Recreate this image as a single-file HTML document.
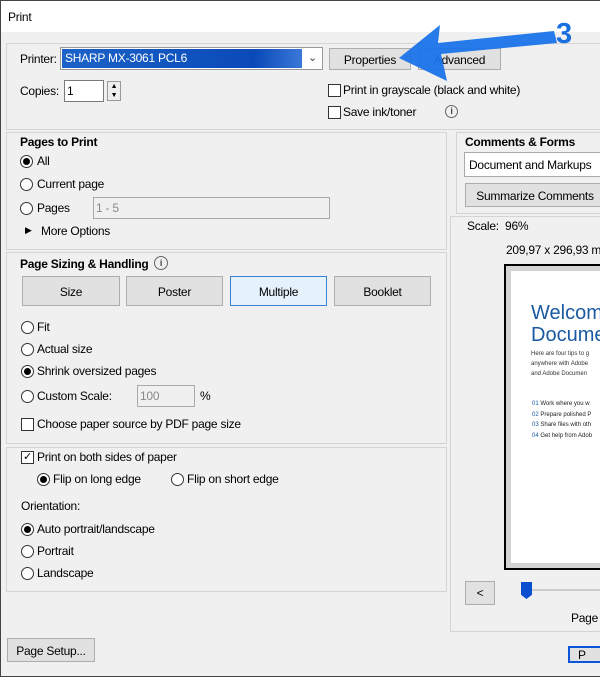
<!DOCTYPE html>
<html><head><meta charset="utf-8"><style>
*{box-sizing:border-box;margin:0;padding:0}
body{width:600px;height:677px;overflow:hidden;background:#f0f0f0;font-family:"Liberation Sans",sans-serif;font-size:12px;letter-spacing:-0.25px;color:#000;position:relative;border-left:1px solid #444;border-top:1px solid #444;border-bottom:1px solid #444}
.a{position:absolute;white-space:nowrap}
.box{position:absolute;border:1px solid #d4d4d4}
.btn{position:absolute;background:#e1e1e1;border:1px solid #adadad;text-align:center}
.rd{position:absolute;width:13px;height:13px;border:1px solid #333;border-radius:50%;background:#fff}
.rd.on::after{content:"";position:absolute;left:2px;top:2px;width:7px;height:7px;border-radius:50%;background:#000}
.cb{position:absolute;width:13px;height:13px;border:1px solid #333;background:#fff}
.in{position:absolute;border:1px solid #aaa;background:#f0f0f0;color:#888;padding-left:2px}
b{font-weight:bold}
</style></head><body>
<div class="a" style="left:0;top:0;width:600px;height:31px;background:#fff"></div>
<div class="a" style="left:7px;top:9px">Print</div>

<div class="box" style="left:5px;top:42px;width:600px;height:87px"></div>
<div class="a" style="left:19px;top:51px">Printer:</div>
<div class="a" style="left:59px;top:46px;width:263px;height:23px;border:1px solid #999;background:#fff"></div>
<div class="a" style="left:61px;top:48px;width:240px;height:19px;background:linear-gradient(90deg,#1c62c8,#0a4ab8 80%,#3a78d8);color:#fff;padding:2px 3px">SHARP MX-3061 PCL6</div>
<div class="a" style="left:307px;top:50px;font-size:11px;color:#444">&#8964;</div>
<div class="btn" style="left:328px;top:47px;width:82px;height:22px;padding-top:4px">Properties</div>
<div class="btn" style="left:417px;top:47px;width:83px;height:22px;padding-top:4px">Advanced</div>
<div class="a" style="left:19px;top:83px">Copies:</div>
<div class="a" style="left:63px;top:79px;width:40px;height:22px;border:1px solid #7a7a7a;background:#fff;padding:3px 2px">1</div>
<div class="a" style="left:106px;top:80px;width:14px;height:20px;border:1px solid #999;background:#eee;font-size:7px;text-align:center;line-height:9px">▲<br>▼</div>
<div class="cb" style="left:327px;top:83px"></div><div class="a" style="left:342px;top:82px">Print in grayscale (black and white)</div>
<div class="cb" style="left:327px;top:105px"></div><div class="a" style="left:342px;top:104px">Save ink/toner</div>
<div class="a" style="left:444px;top:104px;width:13px;height:13px;border:1px solid #666;border-radius:50%;font-size:9px;text-align:center;line-height:11px;color:#444;font-weight:bold">i</div>

<div class="box" style="left:5px;top:131px;width:441px;height:118px"></div>
<div class="a" style="left:19px;top:134px"><b>Pages to Print</b></div>
<div class="rd on" style="left:19px;top:154px"></div><div class="a" style="left:36px;top:153px">All</div>
<div class="rd" style="left:19px;top:177px"></div><div class="a" style="left:36px;top:176px">Current page</div>
<div class="rd" style="left:19px;top:201px"></div><div class="a" style="left:36px;top:200px">Pages</div>
<div class="in" style="left:92px;top:196px;width:237px;height:22px;padding-top:3px">1 - 5</div>
<div class="a" style="left:24px;top:224px;font-size:9px">▶</div><div class="a" style="left:40px;top:223px">More Options</div>

<div class="box" style="left:5px;top:251px;width:441px;height:192px"></div>
<div class="a" style="left:19px;top:256px"><b>Page Sizing &amp; Handling</b></div>
<div class="a" style="left:153px;top:255px;width:14px;height:14px;border:1px solid #666;border-radius:50%;font-size:9px;text-align:center;line-height:12px;color:#444;font-weight:bold">i</div>
<div class="btn" style="left:21px;top:275px;width:98px;height:30px;padding-top:8px">Size</div>
<div class="btn" style="left:125px;top:275px;width:97px;height:30px;padding-top:8px">Poster</div>
<div class="btn" style="left:229px;top:275px;width:97px;height:30px;padding-top:8px;background:#e5f1fb;border-color:#3c83d8">Multiple</div>
<div class="btn" style="left:333px;top:275px;width:97px;height:30px;padding-top:8px">Booklet</div>
<div class="rd" style="left:20px;top:320px"></div><div class="a" style="left:36px;top:319px">Fit</div>
<div class="rd" style="left:20px;top:342px"></div><div class="a" style="left:36px;top:341px">Actual size</div>
<div class="rd on" style="left:20px;top:364px"></div><div class="a" style="left:36px;top:363px">Shrink oversized pages</div>
<div class="rd" style="left:20px;top:389px"></div><div class="a" style="left:36px;top:388px">Custom Scale:</div>
<div class="in" style="left:136px;top:384px;width:58px;height:22px;padding-top:3px">100</div>
<div class="a" style="left:199px;top:388px">%</div>
<div class="cb" style="left:20px;top:417px"></div><div class="a" style="left:36px;top:416px">Choose paper source by PDF page size</div>

<div class="box" style="left:5px;top:446px;width:441px;height:145px"></div>
<div class="cb" style="left:20px;top:450px;font-size:11px;line-height:11px;text-align:center">✓</div><div class="a" style="left:36px;top:449px">Print on both sides of paper</div>
<div class="rd on" style="left:36px;top:472px"></div><div class="a" style="left:52px;top:471px">Flip on long edge</div>
<div class="rd" style="left:170px;top:472px"></div><div class="a" style="left:186px;top:471px">Flip on short edge</div>
<div class="a" style="left:20px;top:498px">Orientation:</div>
<div class="rd on" style="left:20px;top:522px"></div><div class="a" style="left:36px;top:521px">Auto portrait/landscape</div>
<div class="rd" style="left:20px;top:544px"></div><div class="a" style="left:36px;top:543px">Portrait</div>
<div class="rd" style="left:20px;top:566px"></div><div class="a" style="left:36px;top:565px">Landscape</div>

<div class="btn" style="left:6px;top:637px;width:88px;height:24px;padding-top:5px">Page Setup...</div>

<div class="box" style="left:455px;top:131px;width:150px;height:82px"></div>
<div class="a" style="left:464px;top:134px"><b>Comments &amp; Forms</b></div>
<div class="a" style="left:463px;top:151px;width:140px;height:25px;border:1px solid #aaa;background:#fff;padding:5px 4px">Document and Markups</div>
<div class="btn" style="left:464px;top:182px;width:140px;height:24px;padding-top:5px">Summarize Comments</div>

<div class="box" style="left:449px;top:215px;width:160px;height:416px"></div>
<div class="a" style="left:466px;top:218px">Scale:&nbsp; 96%</div>
<div class="a" style="left:505px;top:242px">209,97 x 296,93 mm</div>
<div class="a" style="left:503px;top:263px;width:110px;height:306px;border:2px solid #000;background:#d4d4d4"></div>
<div class="a" style="left:510px;top:270px;width:100px;height:292px;background:#fff"></div>
<div class="a" style="left:530px;top:301px;font-size:20px;letter-spacing:0;color:#1a5aa0;line-height:22px">Welcome<br>Document</div>
<div class="a" style="left:530px;top:348px;font-size:6px;letter-spacing:0;line-height:10px;color:#333">Here are four tips to g<br>anywhere with Adobe<br>and Adobe Documen</div>
<div class="a" style="left:531px;top:398px;font-size:6px;letter-spacing:0;line-height:10.5px;color:#222"><span style="color:#1a5aa0">01</span> Work where you w<br><span style="color:#1a5aa0">02</span> Prepare polished P<br><span style="color:#1a5aa0">03</span> Share files with oth<br><span style="color:#1a5aa0">04</span> Get help from Adob</div>
<div class="btn" style="left:464px;top:580px;width:30px;height:24px;padding-top:4px">&lt;</div>
<div class="a" style="left:520px;top:588px;width:80px;height:2px;background:#ccc"></div>
<div class="a" style="left:520px;top:581px;width:11px;height:17px;background:#0a4ed0;clip-path:polygon(0 0,100% 0,100% 75%,50% 100%,0 75%)"></div>
<div class="a" style="left:570px;top:610px">Page</div>
<div class="btn" style="left:567px;top:645px;width:40px;height:17px;border:2px solid #0a55d8;padding-left:8px;text-align:left">P</div>

<svg class="a" style="left:0;top:0" width="600" height="100">
<polygon points="553,30 556,42 440,53 446,80 398,57 439,24 437,42" fill="#1a73e8" opacity=".95"/>
<text x="555" y="42" font-family="Liberation Sans" font-weight="bold" font-size="29" fill="#1a6fe0">3</text>
</svg>
</body></html>
